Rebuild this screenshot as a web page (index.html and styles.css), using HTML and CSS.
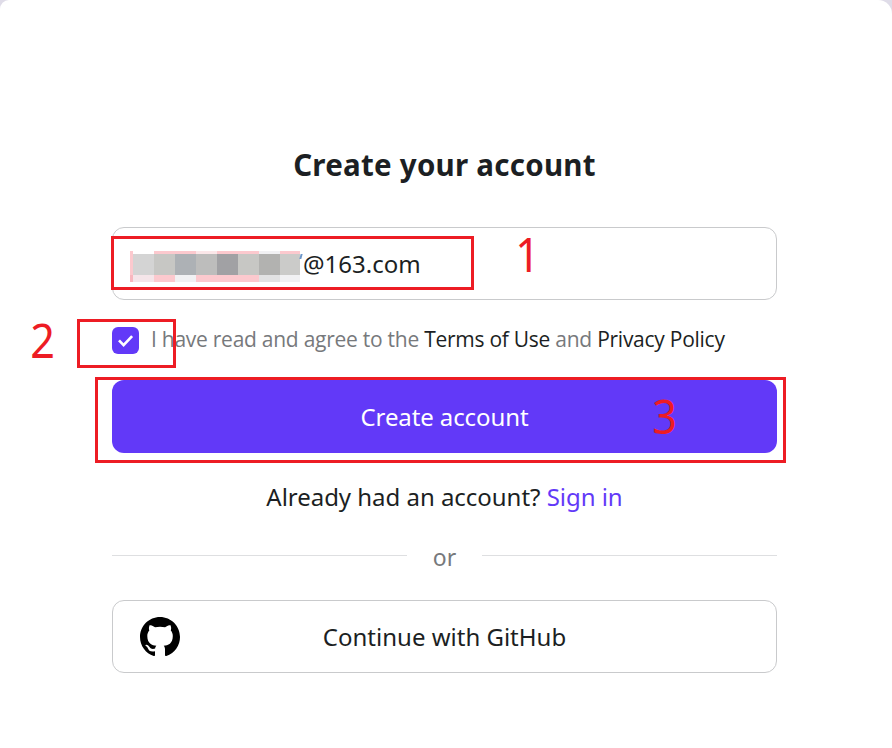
FILE: index.html
```html
<!DOCTYPE html>
<html lang="en">
<head>
<meta charset="utf-8">
<title>Create your account</title>
<link rel="stylesheet" href="styles.css">
</head>
<body>
<main class="card">
  <form class="form">
    <h1 class="title"><span>Create your account</span></h1>
    <div class="field">
      <svg class="mosaic" width="170" height="31" viewBox="0 0 170 31" shape-rendering="crispEdges">
        <path fill="#fcc9ce" d="M0 0h3v24H0zM24 0h42v3H24zM87 0h42v3H87zM150 0h20v3H150zM24 24h21v7H24zM66 24h63v7H66z"/>
        <path fill="#f9b7bf" d="M0 24h3v7H0z"/>
        <path fill="#fbe7e9" d="M66 0h21v3H66z"/>
        <path fill="#f1f1f3" d="M129 0h21v3H129zM45 24h21v7H45zM150 24h20v7H150z"/>
        <path fill="#f5e5e9" d="M3 24h21v7H3z"/>
        <path fill="#e2e2e3" d="M129 24h21v7H129z"/>
        <path fill="#d4d4d4" d="M3 3h21v21H3z"/>
        <path fill="#c7c7c4" d="M24 3h21v21H24zM108 3h21v21H108z"/>
        <path fill="#adb1b5" d="M45 3h21v21H45z"/>
        <path fill="#bdbdbc" d="M66 3h21v21H66z"/>
        <path fill="#a1a1a4" d="M87 3h21v21H87z"/>
        <path fill="#b2b2b0" d="M129 3h21v21H129z"/>
        <path fill="#cbcbc9" d="M150 3h20v21H150z"/>
      </svg>
      <i class="sliver"></i><span class="email">@163.com</span>
    </div>
    <div class="agree">
      <span class="check"><svg width="27" height="27" viewBox="0 0 27 27"><path d="M7 13.4l4.6 4.7 8.5-9" fill="none" stroke="#fff" stroke-width="2.7"/></svg></span>
      <span class="terms">I have read and agree to the <a>Terms of Use</a> and <a>Privacy Policy</a></span>
    </div>
    <button type="button" class="submit"><span>Create account</span></button>
    <p class="signin"><span>Already had an account? <a>Sign in</a></span></p>
    <div class="divider"><span>or</span></div>
    <button type="button" class="github">
      <svg class="logo" width="40" height="40" viewBox="0 0 16 16"><path d="M8 0C3.58 0 0 3.58 0 8c0 3.54 2.29 6.53 5.47 7.59.4.07.55-.17.55-.38 0-.19-.01-.82-.01-1.49-2.01.37-2.53-.49-2.69-.94-.09-.23-.48-.94-.82-1.13-.28-.15-.68-.52-.01-.53.63-.01 1.08.58 1.23.82.72 1.21 1.87.87 2.33.66.07-.52.28-.87.51-1.07-1.78-.2-3.64-.89-3.64-3.95 0-.87.31-1.59.82-2.15-.08-.2-.36-1.02.08-2.12 0 0 .67-.21 2.2.82.64-.18 1.32-.27 2-.27s1.36.09 2 .27c1.53-1.04 2.2-.82 2.2-.82.44 1.1.16 1.92.08 2.12.51.56.82 1.27.82 2.15 0 3.07-1.87 3.75-3.65 3.95.29.25.54.73.54 1.48 0 1.07-.01 1.93-.01 2.2 0 .21.15.46.55.38A8.01 8.01 0 0 0 16 8c0-4.42-3.58-8-8-8z"/></svg>
      <span>Continue with GitHub</span>
    </button>
  </form>
</main>
<div class="mark mark-email"></div>
<div class="mark mark-check"></div>
<div class="mark mark-submit"></div>
<span class="num num-1">1</span>
<span class="num num-2">2</span>
<span class="num num-3">3</span>
</body>
</html>
```
FILE: styles.css
```css
* { box-sizing: border-box; }
body {
  margin: 0;
  height: 748px;
  overflow: hidden;
  position: relative;
  background: #dfdce8;
  color: #1c1f23;
  font-family: "Noto Sans", "Open Sans", sans-serif;
}
.card {
  height: 748px;
  padding: 140px 115px 0 112px;
  background: #fff;
  border-radius: 9px 14px 0 0;
}
.form { display: flex; flex-direction: column; white-space: nowrap; }
.title {
  margin: 0 0 37px;
  height: 50px;
  line-height: 50px;
  font-size: 29.5px;
  font-weight: 700;
  letter-spacing: 0.25px;
  text-align: center;
}
.field, .github {
  height: 73px;
  border: 1px solid #c9cacc;
  border-radius: 12px;
  background: #fff;
}
.field { display: flex; align-items: center; padding-left: 17px; }
.mosaic { flex: none; margin-top: 5px; }
.sliver { width: 2px; height: 5px; margin: -15px 1px 0 0; background: #6d96c8; transform: skewX(-15deg); }
.email { font-size: 24px; line-height: 34px; }
.agree { display: flex; align-items: center; height: 80px; gap: 12px; }
.check { width: 27px; height: 27px; border-radius: 6px; background: #6239f8; }
.check svg { display: block; }
.terms { margin-top: -2px; font-family: "Open Sans", sans-serif; font-size: 21px; letter-spacing: -0.26px; color: #77797c; }
.terms a { color: #1c1f23; }
button { position: relative; padding: 0; font: 24px/34px "Noto Sans", "Open Sans", sans-serif; }
.submit { height: 73px; border: 0; border-radius: 12px; background: #6239f8; color: #fff; }
.submit span { letter-spacing: -0.1px; }
.signin { margin: 27px 0 0; height: 34px; line-height: 34px; font-size: 24px; text-align: center; letter-spacing: -0.03px; }
.signin a { color: #6239f8; }
.divider { display: flex; align-items: center; height: 34px; margin: 24px 0 28px; gap: 26px; font-size: 23px; color: #77797c; }
.divider span { padding-top: 3px; line-height: 30px; }
.divider::before, .divider::after { content: ""; flex: 1; height: 1px; background: #dedfe1; }
.github { color: #1c1f23; }
.logo { position: absolute; left: 27px; top: 16px; }
.mark { position: absolute; border: 3px solid #ed1c24; }
.mark-email { left: 111px; top: 236px; width: 363px; height: 54px; }
.mark-check { left: 77px; top: 319px; width: 99px; height: 49px; }
.mark-submit { left: 95px; top: 377px; width: 691px; height: 86px; }
.num { position: absolute; font-size: 48px; line-height: 50px; color: #ed1c24; transform: scaleX(0.9); }
.num-1 { left: 514px; top: 229px; }
.num-2 { left: 29px; top: 315px; }
.num-3 { left: 651px; top: 391px; }
```
